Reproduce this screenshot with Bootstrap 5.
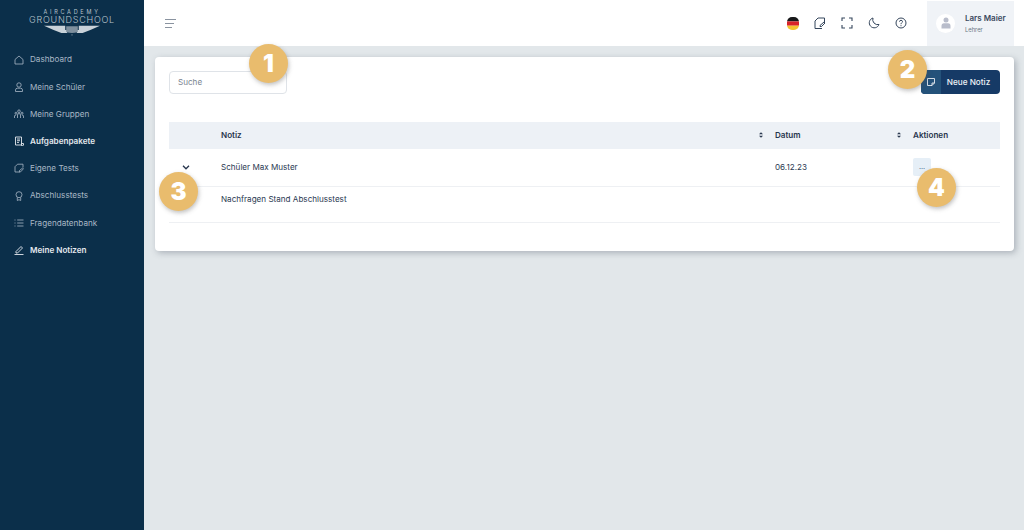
<!DOCTYPE html>
<html lang="de">
<head>
<meta charset="utf-8">
<title>Meine Notizen</title>
<link rel="stylesheet" href="https://cdn.jsdelivr.net/npm/bootstrap@5.3.0/dist/css/bootstrap.min.css">
<style>
html,body{height:100%;}
body{font-family:Inter,"Noto Sans",sans-serif;font-size:8.1px;color:#2b3a52;background:#e2e7ea;overflow:hidden;}
.app-shell{height:530px;width:1024px;position:relative;}
.side-bar{width:144px;flex:none;background:#0b2f4a;}
.logo-box{height:46px;padding-top:9px;color:#b9c4cd;line-height:1;}
.logo-top{font-size:5.5px;letter-spacing:2.75px;line-height:6px;}
.logo-main{font-size:9px;letter-spacing:.75px;line-height:9px;font-weight:300;}
.logo-box svg{display:block;margin:1px auto 0;}
.menu-item{height:27.2px;padding-left:14px;color:#a9b8c6;gap:6px;font-size:8.15px;font-weight:400;}
.menu-item.is-on{color:#e4e9ee;font-weight:600;}
.menu-item svg{width:10px;height:10px;flex:none;}
.top-bar{height:46px;background:#fff;flex:none;padding-left:21px;}
.top-icons{gap:15px;margin-right:20px;}
.top-icons svg{display:block;}
.user-box{width:87px;height:45px;background:#f0f3f7;margin-right:10px;padding-left:9px;gap:10px;}
.user-pic{width:19px;height:19px;border-radius:50%;background:#fff;}
.user-name{font-size:8px;font-weight:600;color:#3b4a60;line-height:10px;}
.user-role{font-size:5.8px;color:#6b7785;line-height:9px;margin-top:2px;}
.work-area{padding:11px 10px 0 11px;}
.note-card{height:194px;border:0;border-radius:4px;box-shadow:2px 2px 6px rgba(70,80,95,.35);padding:13px 14px 14px;background:#fff;}
.find-box{width:118px;height:23px;min-height:0;font-size:8.1px;margin-top:1px;padding:0 8px 1px;border-color:#dfe3e8;border-radius:4px;color:#66707c;}
.find-box::placeholder{color:#7a8490;}
.new-btn{height:24px;width:79px;padding:0;border:0;border-radius:4px;background:#163a66;color:#eef2f6;font-size:8.2px;font-weight:500;overflow:hidden;}
.new-ico{width:20px;height:24px;background:#24527a;flex:none;}
.new-txt{flex:1;text-align:center;padding-right:4px;}
.note-table{margin:28px 0 0;width:831px;table-layout:fixed;font-size:8.1px;color:#2b3a52;}
.note-table th{height:27px;padding:0;background:#edf1f6;border:0;font-weight:600;color:#27354d;vertical-align:middle;box-shadow:none;}
.note-table td{padding:0;border-bottom:1px solid #eef0f3;vertical-align:middle;background:#fff;box-shadow:none;color:#2b3a52;}
.row-a td{height:37px;}
.row-b td{height:36px;}
.note-table .row-b .body-cell{padding-bottom:10px;}
.sort-mark{float:right;margin-right:12px;margin-top:3px;}
.more-btn{width:18px;height:18px;background:#e6eff7;border-radius:2px;color:#35608c;font-size:7px;line-height:14px;padding:0;border:0;display:block;}
.num-pin{position:absolute;width:39px;height:39px;border-radius:50%;background:#e9bc6d;color:#fff;font-weight:900;font-size:24px;line-height:39px;text-align:center;box-shadow:1px 2px 4px rgba(80,80,80,.35);font-family:Inter,sans-serif;}
.pin-a{left:249px;top:44px;}
.pin-b{left:888px;top:50px;}
.pin-c{left:159px;top:172px;}
.pin-d{left:917px;top:168px;}
</style>
</head>
<body>
<div class="app-shell d-flex">
  <aside class="side-bar d-flex flex-column">
    <div class="logo-box text-center">
      <div class="logo-top">AIRCADEMY</div>
      <div class="logo-main">GROUNDSCHOOL</div>
      <svg width="56" height="11" viewBox="0 0 58 11"><path d="M0 .5H22V5H24V8H18L10 5Z" fill="#c9d2d9"/><path d="M58 .5H36V5H34V8H40L48 5Z" fill="#c9d2d9"/><path d="M23 1H35V7Q29 9 23 7Z" fill="#7f909e"/><path d="M28.7 9h.6v2h-.6z" fill="#9aa8b3"/></svg>
    </div>
    <nav class="d-flex flex-column">
      <a class="menu-item d-flex align-items-center text-decoration-none"><svg viewBox="0 0 10 10" fill="none" stroke="currentColor" stroke-width=".8"><path d="M1 4.500 5 1l4 3.500V9H1Z"/></svg>Dashboard</a>
      <a class="menu-item d-flex align-items-center text-decoration-none"><svg viewBox="0 0 10 10" fill="none" stroke="currentColor" stroke-width=".8"><circle cx="5" cy="3" r="2.200"/><path d="M1.500 9.500V8q0-1.800 2-1.800h3q2 0 2 1.800v1.500Z"/></svg>Meine Schüler</a>
      <a class="menu-item d-flex align-items-center text-decoration-none"><svg viewBox="0 0 10 10" fill="none" stroke="currentColor" stroke-width=".8"><circle cx="5" cy="2.200" r="1.300"/><circle cx="2" cy="4.200" r="1"/><circle cx="8" cy="4.200" r="1"/><path d="M3.500 9V6q0-1.500 1.500-1.500T6.500 6v3M.5 9V7q0-1 1.500-1M9.500 9V7q0-1-1.500-1"/></svg>Meine Gruppen</a>
      <a class="menu-item is-on d-flex align-items-center text-decoration-none"><svg viewBox="0 0 10 10" fill="none" stroke="currentColor" stroke-width=".9"><path d="M1.500 1h6v8h-6Z"/><path d="M3 3h3M3 4.700h3M3 6.400h2M7.500 7.500H9.500V9q0 .6-.8.600H7"/></svg>Aufgabenpakete</a>
      <a class="menu-item d-flex align-items-center text-decoration-none"><svg viewBox="0 0 10 10" fill="none" stroke="currentColor" stroke-width=".8"><path d="M9 4.500V1.200H3.500L1 3.700V9h5"/><path d="M5.500 7.500 8.600 5l.8.800-2.700 3H5.500Z"/></svg>Eigene Tests</a>
      <a class="menu-item d-flex align-items-center text-decoration-none"><svg viewBox="0 0 10 10" fill="none" stroke="currentColor" stroke-width=".8"><circle cx="5" cy="3.700" r="3"/><path d="M3.300 6.500V9.500L5 8.700l1.700.8V6.500"/></svg>Abschlusstests</a>
      <a class="menu-item d-flex align-items-center text-decoration-none"><svg viewBox="0 0 10 10" fill="none" stroke="currentColor" stroke-width=".8"><path d="M3.200 2H9.500M3.200 5H9.500M3.200 8H9.500M.5 2h1M.5 5h1M.5 8h1"/></svg>Fragendatenbank</a>
      <a class="menu-item is-on d-flex align-items-center text-decoration-none"><svg viewBox="0 0 10 10" fill="none" stroke="currentColor" stroke-width=".9"><path d="M2 6.500 7 1.500l1.500 1.500-5 5H2ZM.5 9.500h9"/></svg>Meine Notizen</a>
    </nav>
  </aside>
  <main class="flex-grow-1 d-flex flex-column">
    <header class="top-bar d-flex align-items-center">
      <svg width="12" height="9" viewBox="0 0 12 9" stroke="#8a93a0" stroke-width="1"><path d="M0 .5h11M0 4.500h9M0 8.500h7"/></svg>
      <div class="top-icons d-flex align-items-center ms-auto">
        <svg width="12" height="13" viewBox="0 0 12 13"><defs><clipPath id="flagclip"><rect width="12" height="13" rx="5"/></clipPath></defs><g clip-path="url(#flagclip)"><rect width="12" height="4.400" fill="#17181a"/><rect y="4.400" width="12" height="4.300" fill="#d8232a"/><rect y="8.700" width="12" height="4.300" fill="#f4c430"/></g></svg>
        <svg width="12" height="12" viewBox="0 0 12 12" fill="none" stroke="#35465c" stroke-width="1"><path d="M10.500 5V1H4L1 4v7.500H8"/><path d="M6 8.500 10 5l1 1-3.500 3.500H6Z"/></svg>
        <svg width="12" height="12" viewBox="0 0 12 12" fill="none" stroke="#35465c" stroke-width="1.100"><path d="M1 4V1H4M8 1h3V4M11 8v3H8M4 11H1V8"/></svg>
        <svg width="12" height="12" viewBox="0 0 12 12" fill="none" stroke="#35465c" stroke-width="1"><path d="M5 1a5 5 0 1 0 6 6.500A5 5 0 0 1 5 1Z"/></svg>
        <svg width="12" height="12" viewBox="0 0 12 12" fill="none" stroke="#35465c" stroke-width="1"><circle cx="6" cy="6" r="5"/><path d="M4.500 4.700Q4.600 3.300 6 3.300T7.500 4.600C7.500 5.800 6 5.700 6 7.200M6 8.200v1"/></svg>
      </div>
      <div class="user-box d-flex align-items-center">
        <div class="user-pic d-flex align-items-center justify-content-center flex-none">
          <svg width="10" height="12" viewBox="0 0 10 12" fill="#b9bdcb"><circle cx="5" cy="3" r="2.500"/><path d="M.5 11.500V9q0-2.700 2.500-2.700h4q2.500 0 2.500 2.700v2.500Z"/></svg>
        </div>
        <div>
          <div class="user-name text-nowrap">Lars Maier</div>
          <div class="user-role">Lehrer</div>
        </div>
      </div>
    </header>
    <div class="work-area">
      <section class="card note-card">
        <div class="d-flex justify-content-between align-items-start">
          <input class="form-control find-box" type="text" placeholder="Suche">
          <button class="btn new-btn d-flex align-items-center" type="button">
            <span class="new-ico d-flex align-items-center justify-content-center"><svg width="8" height="8" viewBox="0 0 8 8" fill="none" stroke="#fff" stroke-width=".8"><path d="M.5.500h7v4.500L5 7.500H.5Z"/><path d="M5 7.500V5h2.500"/></svg></span>
            <span class="new-txt">Neue Notiz</span>
          </button>
        </div>
        <table class="table note-table">
          <colgroup><col style="width:52px"><col style="width:554px"><col style="width:138px"><col></colgroup>
          <thead>
            <tr>
              <th></th>
              <th>Notiz<svg class="sort-mark" width="4" height="6" viewBox="0 0 5 7" fill="#27354d"><path d="M2.500 0 5 2.500H0ZM2.500 7 0 4.500H5Z"/></svg></th>
              <th>Datum<svg class="sort-mark" width="4" height="6" viewBox="0 0 5 7" fill="#27354d"><path d="M2.500 0 5 2.500H0ZM2.500 7 0 4.500H5Z"/></svg></th>
              <th>Aktionen</th>
            </tr>
          </thead>
          <tbody>
            <tr class="row-a">
              <td><svg class="d-block" style="margin-left:13px" width="8" height="5" viewBox="0 0 8 5" fill="none" stroke="#27354d" stroke-width="1.300"><path d="m1 .8 3 3 3-3"/></svg></td>
              <td>Schüler Max Muster</td>
              <td>06.12.23</td>
              <td><button class="more-btn" type="button">...</button></td>
            </tr>
            <tr class="row-b">
              <td></td>
              <td colspan="3" class="body-cell">Nachfragen Stand Abschlusstest</td>
            </tr>
          </tbody>
        </table>
      </section>
    </div>
  </main>
  <div class="num-pin pin-a">1</div>
  <div class="num-pin pin-b">2</div>
  <div class="num-pin pin-c">3</div>
  <div class="num-pin pin-d">4</div>
</div>
<script src="https://cdn.jsdelivr.net/npm/bootstrap@5.3.0/dist/js/bootstrap.bundle.min.js"></script>
</body>
</html>
